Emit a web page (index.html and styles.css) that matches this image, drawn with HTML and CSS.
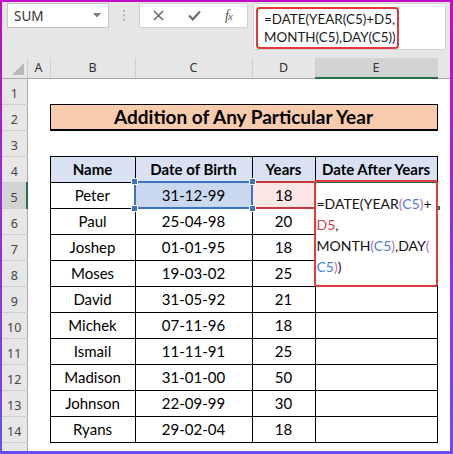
FILE: index.html
```html
<!DOCTYPE html>
<html>
<head>
<meta charset="utf-8">
<link rel="stylesheet" href="styles.css">
</head>
<body>
<div class="frame">
  <div class="toolbar">
    <div class="namebox">
      <span>SUM</span>
      <svg class="dd" width="8" height="5" viewBox="0 0 8 5"><path d="M0 0H8L4 4.5Z" fill="#7a7a7a"/></svg>
    </div>
    <div class="dots">
      <svg width="3" height="11" viewBox="0 0 3 11"><rect x="0" y="0" width="2" height="2" fill="#b4b4b4"/><rect x="0" y="4.5" width="2" height="2" fill="#b4b4b4"/><rect x="0" y="9" width="2" height="2" fill="#b4b4b4"/></svg>
    </div>
    <div class="btnbox">
      <svg width="11" height="11" viewBox="0 0 11 11"><path d="M1 1L10 10M10 1L1 10" stroke="#6e6e6e" stroke-width="1.6" fill="none"/></svg>
      <svg width="13" height="11" viewBox="0 0 13 11"><path d="M1 5.5L4.8 9.3L12 1.5" stroke="#6e6e6e" stroke-width="2.2" fill="none"/></svg>
      <span class="fx">f<span class="fxx">x</span></span>
    </div>
    <div class="formula">
      <div class="fbox">=DATE(YEAR(C5)+D5,<br>MONTH(C5),DAY(C5))</div>
    </div>
  </div>
  <table class="sheet">
    <colgroup>
      <col class="w-rh"><col class="w-a"><col class="w-b"><col class="w-c"><col class="w-d"><col class="w-e"><col>
    </colgroup>
    <tr class="colhead">
      <th class="corner"><svg class="selall" width="12" height="12" viewBox="0 0 12 12"><path d="M12 0V12H0Z" fill="#b9b9b9"/></svg></th>
      <th>A</th><th>B</th><th>C</th><th>D</th><th class="on">E</th><th class="last"></th>
    </tr>
    <tr class="r"><th class="rh">1</th><td></td><td></td><td></td><td></td><td></td><td></td></tr>
    <tr class="r"><th class="rh">2</th><td></td><td colspan="4" class="title">Addition of Any Particular Year</td><td></td></tr>
    <tr class="r"><th class="rh">3</th><td></td><td></td><td></td><td></td><td></td><td></td></tr>
    <tr class="r"><th class="rh">4</th><td></td><td class="hd">Name</td><td class="hd">Date of Birth</td><td class="hd">Years</td><td class="hd">Date After Years</td><td></td></tr>
    <tr class="r"><th class="rh on">5</th><td></td><td class="b">Peter</td>
      <td class="b selc">31-12-99<span class="h tl"></span><span class="h tr"></span><span class="h bl"></span><span class="h br"></span></td>
      <td class="b seld">18</td>
      <td class="b edit"><div class="editor">=DATE(YEAR<span class="p">(</span><span class="rc">C5</span><span class="p">)</span>+<br><span class="rd">D5</span>,<br>MONTH<span class="p">(</span><span class="rc">C5</span><span class="p">)</span>,DAY<span class="p">(</span><br><span class="rc">C5</span><span class="p">)</span>)</div></td><td></td></tr>
    <tr class="r"><th class="rh">6</th><td></td><td class="b">Paul</td><td class="b">25-04-98</td><td class="b">20</td><td class="b"></td><td></td></tr>
    <tr class="r"><th class="rh">7</th><td></td><td class="b">Joshep</td><td class="b">01-01-95</td><td class="b">18</td><td class="b"></td><td></td></tr>
    <tr class="r"><th class="rh">8</th><td></td><td class="b">Moses</td><td class="b">19-03-02</td><td class="b">25</td><td class="b"></td><td></td></tr>
    <tr class="r"><th class="rh">9</th><td></td><td class="b">David</td><td class="b">31-05-92</td><td class="b">21</td><td class="b"></td><td></td></tr>
    <tr class="r"><th class="rh">10</th><td></td><td class="b">Michek</td><td class="b">07-11-96</td><td class="b">18</td><td class="b"></td><td></td></tr>
    <tr class="r"><th class="rh">11</th><td></td><td class="b">Ismail</td><td class="b">11-11-91</td><td class="b">25</td><td class="b"></td><td></td></tr>
    <tr class="r"><th class="rh">12</th><td></td><td class="b">Madison</td><td class="b">31-01-00</td><td class="b">50</td><td class="b"></td><td></td></tr>
    <tr class="r"><th class="rh">13</th><td></td><td class="b">Johnson</td><td class="b">22-09-99</td><td class="b">30</td><td class="b"></td><td></td></tr>
    <tr class="r"><th class="rh">14</th><td></td><td class="b">Ryans</td><td class="b">29-02-04</td><td class="b">18</td><td class="b"></td><td></td></tr>
    <tr class="r15"><th class="rh"></th><td></td><td></td><td></td><td></td><td></td><td></td></tr>
  </table>
</div>
</body>
</html>
```
FILE: styles.css
```css
html, body {
  margin: 0;
  padding: 0;
}

.frame {
  width: 453px;
  height: 454px;
  box-sizing: border-box;
  border-style: solid;
  border-width: 2px 3px 3px 2px;
  border-image: linear-gradient(to bottom, #c20ac8, #6a4cf4) 1;
  background: #e6e6e6;
  overflow: hidden;
}

.toolbar {
  height: 56px;
  box-sizing: border-box;
  padding-top: 1px;
  display: flex;
  align-items: flex-start;
}

.namebox {
  margin-left: 5px;
  width: 102px;
  height: 25px;
  box-sizing: border-box;
  border: 1px solid #c6c6c6;
  background: #fff;
  display: flex;
  align-items: center;
  justify-content: space-between;
  padding: 0 7px 0 6px;
  font: 13.5px "Noto Sans", sans-serif;
  color: #333;
}

.dots {
  width: 30px;
  height: 25px;
  display: flex;
  align-items: center;
  justify-content: center;
}

.btnbox {
  width: 109px;
  height: 25px;
  box-sizing: border-box;
  border: 1px solid #d2d2d2;
  background: #fff;
  display: flex;
  align-items: center;
  gap: 24px;
  padding-left: 13px;
}

.fx {
  font: italic 14px "Liberation Serif", serif;
  color: #5a5a5a;
  letter-spacing: -1px;
}

.fxx {
  font-size: 11px;
}

.formula {
  margin-left: 5px;
  width: 193px;
  height: 47px;
  box-sizing: border-box;
  background: #fff;
  border: 1px solid #d2d2d2;
  padding: 3px 0 0 2px;
}

.fbox {
  width: 143px;
  height: 42px;
  box-sizing: border-box;
  border: 2px solid #e4393c;
  border-radius: 4px;
  padding: 1px 0 0 6px;
  font: 13.4px Lato, sans-serif;
  line-height: 18px;
  color: #1a1a1a;
  white-space: nowrap;
}

.sheet {
  width: 448px;
  table-layout: fixed;
  border-collapse: collapse;
  font: 15px Lato, sans-serif;
  color: #000;
}

.w-rh { width: 25px; }
.w-a { width: 23px; }
.w-b { width: 85px; }
.w-c { width: 117px; }
.w-d { width: 63px; }
.w-e { width: 122px; }

.sheet td, .sheet th {
  padding: 0;
  text-align: center;
}

.sheet td {
  background: #fff;
}

.colhead {
  height: 20px;
}

.colhead th {
  background: #e6e6e6;
  font: 12.5px "Noto Sans", sans-serif;
  color: #333;
  border-right: 1px solid #cfcfcf;
  border-bottom: 1px solid #a9a9a9;
  vertical-align: middle;
}

.colhead th.on {
  background: #d3d3d3;
  border-bottom: 2px solid #217346;
}

.colhead th.last {
  border-right: none;
}

.corner {
  position: relative;
}

.selall {
  position: absolute;
  right: 3px;
  bottom: 3px;
}

.r {
  height: 26px;
}

.r15 {
  height: 9px;
}

.rh {
  background: #e6e6e6;
  font: 12.5px "Noto Sans", sans-serif;
  font-weight: normal;
  color: #444;
  border-right: 1px solid #a9a9a9;
  border-bottom: 1px solid #cdcdcd;
  vertical-align: bottom;
  padding-bottom: 2px !important;
}

.rh.on {
  background: #d3d3d3;
  border-right: 2px solid #217346;
}

.title {
  background: #f8cbad !important;
  border: 1px solid #000;
  border-bottom: 2px solid #000;
  font-weight: bold;
  font-size: 19px;
}

.hd {
  background: #d9e1f2 !important;
  border: 1px solid #000;
  font-weight: bold;
}

.b {
  border: 1px solid #000;
}

.selc {
  position: relative;
  background: #c9d8ef !important;
  border: 2px solid #3d72c6;
}

.seld {
  background: #fbe5e5 !important;
  border-top: 2px solid #c5393d;
  border-bottom: 2px solid #c5393d;
}

.h {
  position: absolute;
  width: 5px;
  height: 5px;
  background: #3d72c6;
  border: 1px solid #fff;
  box-sizing: content-box;
}

.h.tl { left: -5px; top: -5px; }
.h.tr { right: -5px; top: -5px; }
.h.bl { left: -5px; bottom: -5px; }
.h.br { right: -5px; bottom: -5px; }

.edit {
  position: relative;
}

.editor {
  position: absolute;
  z-index: 3;
  left: -2px;
  top: -3px;
  width: 124px;
  height: 107px;
  box-sizing: border-box;
  border: 2px solid #e23a3e;
  border-radius: 3px;
  background: #fff;
  text-align: left;
  padding: 11px 0 0 1px;
  font: 14px Lato, sans-serif;
  line-height: 21px;
  color: #111;
  white-space: nowrap;
  box-shadow: inset 0 1px 0 #1e6b41;
}

.editor::after {
  content: "";
  position: absolute;
  right: -4px;
  top: 24px;
  width: 2px;
  height: 4px;
  background: #217346;
}

.p { color: #c06ac4; }
.rc { color: #4a7fd4; }
.rd { color: #c8414b; }
```
